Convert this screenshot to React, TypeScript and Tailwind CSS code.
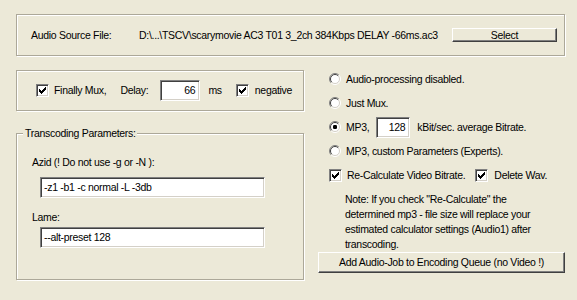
import React from "react";

const font = { fontFamily: '"Liberation Sans", Arial, sans-serif' };

function Check() {
  return (
    <div className="w-[13px] h-[13px] shrink-0 bg-white border border-t-[#808080] border-l-[#808080] border-b-white border-r-white shadow-[inset_1px_1px_0_#404040,inset_-1px_-1px_0_#d4d0c8] flex items-center justify-center">
      <svg width="11" height="11" viewBox="0 0 11 11" shapeRendering="crispEdges">
        <path
          d="M2 4h1v3h-1z M3 5h1v3h-1z M4 6h1v3h-1z M5 5h1v3h-1z M6 4h1v3h-1z M7 3h1v3h-1z M8 2h1v3h-1z"
          fill="#000"
        />
      </svg>
    </div>
  );
}

function Radio({ checked }: { checked?: boolean }) {
  return (
    <svg width="12" height="12" viewBox="0 0 12 12" className="shrink-0">
      <circle cx="6" cy="6" r="5" fill="#fff" />
      <path d="M2.1 9.9 A5.5 5.5 0 0 1 9.9 2.1" stroke="#808080" strokeWidth="1" fill="none" />
      <path d="M2.8 9.2 A4.5 4.5 0 0 1 9.2 2.8" stroke="#404040" strokeWidth="1" fill="none" />
      <path d="M9.9 2.1 A5.5 5.5 0 0 1 2.1 9.9" stroke="#ffffff" strokeWidth="1" fill="none" />
      <path d="M9.2 2.8 A4.5 4.5 0 0 1 2.8 9.2" stroke="#d4d0c8" strokeWidth="1" fill="none" />
      {checked && <rect x="4" y="4" width="4" height="4" rx="1.2" fill="#000" />}
    </svg>
  );
}

function Input({ className, children, right }: { className: string; children: React.ReactNode; right?: boolean }) {
  return (
    <div
      className={
        "bg-white border border-t-[#808080] border-l-[#808080] border-b-white border-r-white shadow-[inset_1px_1px_0_#404040,inset_-1px_-1px_0_#d4d0c8] flex items-center text-black whitespace-nowrap " +
        (right ? "justify-end pr-[4px] " : "pl-[3px] ") +
        className
      }
    >
      {children}
    </div>
  );
}

function Button({ className, children }: { className: string; children: React.ReactNode }) {
  return (
    <div
      className={
        "bg-[#ece9d8] border border-t-white border-l-white border-b-[#404040] border-r-[#404040] shadow-[inset_-1px_-1px_0_#808080] flex items-center justify-center text-black whitespace-nowrap " +
        className
      }
    >
      {children}
    </div>
  );
}

export default function App() {
  return (
    <div className="w-[577px] h-[300px] bg-[#ece9d8] text-black text-[10.5px] tracking-[-0.3px] leading-none overflow-hidden" style={font}>
      <div className="pt-[14px] pl-[16px]">
        {/* top group */}
        <div className="w-[549px] h-[42px] border border-[#aca899] shadow-[inset_1px_1px_0_#fff,1px_1px_0_#fff] flex items-center">
          <span className="ml-[14px] w-[108px]">Audio Source File:</span>
          <span className="whitespace-nowrap">D:\...\TSCV\scarymovie AC3 T01 3_2ch 384Kbps DELAY -66ms.ac3</span>
          <Button className="ml-auto mr-[7px] w-[105px] h-[14px]">Select</Button>
        </div>

        <div className="flex mt-[1px]">
          {/* left column */}
          <div className="w-[288px] flex flex-col">
            <div className="mt-[13px] h-[41px] border border-[#aca899] shadow-[inset_1px_1px_0_#fff,1px_1px_0_#fff] flex items-center">
              <div className="ml-[19px]"><Check /></div>
              <span className="ml-[5px]">Finally Mux,</span>
              <span className="ml-[14px]">Delay:</span>
              <Input right className="ml-[12px] w-[40px] h-[21px]">66</Input>
              <span className="ml-[8px]">ms</span>
              <div className="ml-[14px]"><Check /></div>
              <span className="ml-[6px]">negative</span>
            </div>

            <div className="relative mt-[22px] h-[147px] border border-[#aca899] shadow-[inset_1px_1px_0_#fff,1px_1px_0_#fff]">
              <span className="absolute left-[6px] -top-[6px] bg-[#ece9d8] pl-[2px] pr-[1px]">Transcoding Parameters:</span>
              <div className="pl-[15px] pt-[23px] flex flex-col">
                <span>Azid (! Do not use -g or -N ):</span>
                <Input className="mt-[9px] ml-[8px] w-[225px] h-[21px]">-z1 -b1 -c normal -L -3db</Input>
                <span className="mt-[14px]">Lame:</span>
                <Input className="mt-[5px] ml-[8px] w-[225px] h-[21px]">--alt-preset 128</Input>
              </div>
            </div>
          </div>

          {/* right column */}
          <div className="ml-[14px] w-[247px] flex flex-col">
            <div className="mt-[10px] pl-[11px] flex flex-col">
              <div className="h-[24px] flex items-center">
                <Radio />
                <span className="ml-[5px]">Audio-processing disabled.</span>
              </div>
              <div className="h-[24px] flex items-center">
                <Radio />
                <span className="ml-[5px]">Just Mux.</span>
              </div>
              <div className="h-[24px] flex items-center">
                <Radio checked />
                <span className="ml-[5px]">MP3,</span>
                <Input right className="ml-[7px] w-[34px] h-[21px]">128</Input>
                <span className="ml-[7px]">kBit/sec. average Bitrate.</span>
              </div>
              <div className="h-[24px] flex items-center">
                <Radio />
                <span className="ml-[5px]">MP3, custom Parameters (Experts).</span>
              </div>
              <div className="h-[24px] flex items-center">
                <Check />
                <span className="ml-[5px]">Re-Calculate Video Bitrate.</span>
                <div className="ml-[10px]"><Check /></div>
                <span className="ml-[6px]">Delete Wav.</span>
              </div>
              <div className="mt-[5px] pl-[16px] leading-[15px] whitespace-nowrap flex flex-col">
                <span>Note: If you check "Re-Calculate" the</span>
                <span>determined mp3 - file size will replace your</span>
                <span>estimated calculator settings (Audio1) after</span>
                <span>transcoding.</span>
              </div>
            </div>
            <Button className="mt-[0px] w-[247px] h-[21px]">Add Audio-Job to Encoding Queue (no Video !)</Button>
          </div>
        </div>
      </div>
    </div>
  );
}
